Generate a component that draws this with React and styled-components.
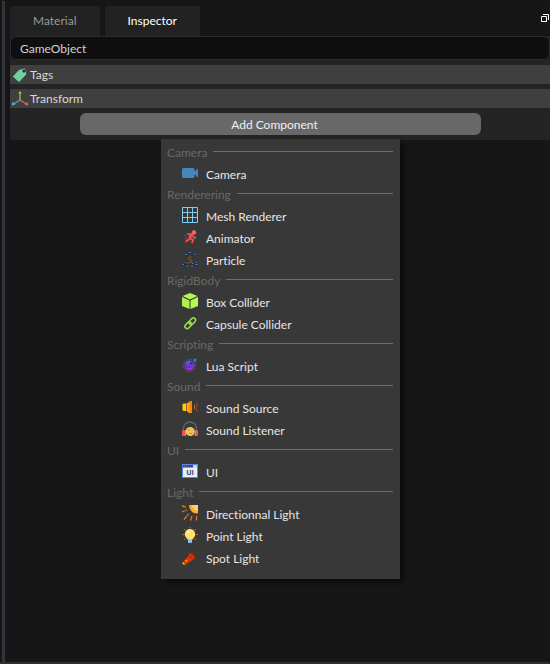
import React from "react";
import styled, { createGlobalStyle } from "styled-components";

const GlobalStyle = createGlobalStyle`
  *, *::before, *::after { box-sizing: border-box; }
  body { margin: 0; background: #161616; }
  body, button, input {
    font-family: Lato, "Open Sans", sans-serif;
    font-size: 12px;
    line-height: 16px;
    font-variant-ligatures: none;
  }
`;

const Dock = styled.main`
  display: flex;
  min-height: 100vh;
  padding: 1px 0 0 2px;
  background: #161616;
  border-bottom: 2px solid #2b2e32;
`;

const Splitter = styled.div`
  flex: none;
  width: 3px;
  background: #2f353a;
`;

const Content = styled.div`
  flex: 1;
  min-width: 0;
  padding: 5px 0 0 5px;
`;

const TabBar = styled.div`
  display: flex;
  align-items: flex-start;
  gap: 5px;
`;

const Tab = styled.button`
  height: 30px;
  padding: 0 23px;
  border: 0;
  border-radius: 2px 2px 0 0;
  background: #222222;
  color: ${(p) => (p["aria-selected"] ? "#ffffff" : "#989898")};
`;

const FloatButton = styled.button`
  display: flex;
  margin: 8px 1px 0 auto;
  padding: 0;
  border: 0;
  background: none;
`;

const Panel = styled.section`
  display: flex;
  flex-direction: column;
  gap: 5px;
  padding-bottom: 5px;
  background: #242424;
`;

const NameInput = styled.input`
  width: 100%;
  height: 24px;
  padding: 0 9px;
  border: 1px solid #2c2c2c;
  border-radius: 6px;
  background: #0f0f0f;
  color: #d2d2d2;
  outline: none;
`;

const Header = styled.button`
  display: flex;
  align-items: center;
  gap: 2px;
  height: 19px;
  padding: 0 2px;
  border: 0;
  background: #3f3f3f;
  color: #d8d8d8;
  text-align: left;
`;

const AddArea = styled.div`
  position: relative;
  margin: 0 69px 0 70px;
`;

const AddButton = styled.button`
  display: block;
  width: 100%;
  height: 22px;
  padding: 2px 12px 0 0;
  border: 0;
  border-radius: 6px;
  background: #686868;
  color: #f0f0f0;
`;

const Menu = styled.div`
  position: absolute;
  top: 100%;
  left: 0;
  right: 0;
  width: 239px;
  margin: 4px auto 0;
  padding: 5px 7px 9px 6px;
  background: #383838;
  box-shadow: 4px 4px 4px rgba(0, 0, 0, 0.45);
`;

const SectionTitle = styled.div`
  display: flex;
  gap: 6px;
  height: 20px;
  line-height: 18px;
  color: #686868;

  &::after {
    content: "";
    flex: 1;
    height: 1px;
    margin-top: 7px;
    background: #6e6e6e;
  }
`;

const Item = styled.button`
  display: flex;
  align-items: flex-start;
  gap: 8px;
  width: 100%;
  height: 22px;
  padding: 1px 0 0 15px;
  border: 0;
  background: none;
  color: #e6e6e6;
  text-align: left;
`;

const ItemLabel = styled.span`
  line-height: 20px;
`;

const Glyph = styled.svg`
  flex: none;
  display: block;
`;

const Icon = ({ children, size = 16 }) => (
  <Glyph width={size} height={size} viewBox={`0 0 ${size} ${size}`} aria-hidden="true">
    {children}
  </Glyph>
);

const TagIcon = () => (
  <Icon>
    <path d="M7 2.500 14 1l.5 6.500L7 15.500.5 9.500Z" fill="#72cf9f" stroke="#28332d" strokeWidth=".6" />
    <circle cx="12" cy="4" r="1.600" fill="#202824" />
    <path d="m12.500 3.500 3-3" stroke="#263a30" />
  </Icon>
);

const AxesIcon = () => (
  <Icon>
    <path d="M8 9V2" stroke="#8bc34a" strokeWidth="1.300" />
    <path d="m8 9-6.500 4" stroke="#5ba3c8" strokeWidth="1.300" />
    <path d="m8 9 6.500 4" stroke="#e8653a" strokeWidth="1.300" />
    <path d="M6.300 2.500h3.400L8 0Z" fill="#a4d844" />
    <path d="m0 14 1-2.500 1.700 2Z" fill="#64b5dc" stroke="#64b5dc" strokeWidth=".7" />
    <path d="m16 14-1-2.500-1.700 2Z" fill="#f36b40" stroke="#f36b40" strokeWidth=".7" />
  </Icon>
);

const CameraIcon = () => (
  <Icon>
    <rect y="3" width="12.500" height="10" rx="1.500" fill="#4387be" />
    <path d="M12 6h1.500L15 4h1v8h-1l-1.500-2H12Z" fill="#4387be" />
  </Icon>
);

const MeshIcon = () => (
  <Icon>
    <path d="M.5.5h15v15H.5ZM5.500 0v16M10.500 0v16M0 5.500h16M0 10.500h16" fill="none" stroke="#7fcdf5" />
  </Icon>
);

const AnimatorIcon = () => (
  <Icon>
    <circle cx="12" cy="3.500" r="2.200" fill="#ff6262" />
    <path d="M5 5h5l2 4 2-1" fill="none" stroke="#f25353" strokeWidth="1.600" strokeLinejoin="round" />
    <path d="m9.500 5-2 4" stroke="#f25353" strokeWidth="3" />
    <path d="m7.500 9 3.500 2-1 3M7.500 9.500 6 11.500H3.500" fill="none" stroke="#f25353" strokeWidth="1.800" strokeLinejoin="round" />
    <path d="M2 6.500h2.500M3 9h2.500M3 13.500h2" stroke="#993e3e" />
  </Icon>
);

const ParticleIcon = () => (
  <Icon>
    <g fill="#1b2c45">
      <circle cx="8" cy="2" r="1.200" />
      <circle cx="3.500" cy="4" r="1.200" />
      <circle cx="12.500" cy="4" r="1.200" />
      <circle cx="2" cy="13.500" r="1.500" />
      <circle cx="5.500" cy="14" r="1.500" />
      <circle cx="10" cy="14" r="1.500" />
      <circle cx="14" cy="13.500" r="1.500" />
    </g>
    <path d="M7 1.500h2M3 3.500h1.500M12 3.500h1.500M1.500 11.500h1M13.500 11.500h1M.5 13.500H2M4.500 12.500h1M4.500 15h2M9 15h2M10 12.500h1M13.500 13.500h2" stroke="#3a8af0" />
    <path d="M9.500 6H7v3h2.500v2.500H6.500" fill="none" stroke="#82541c" />
  </Icon>
);

const BoxIcon = () => (
  <Icon>
    <path d="M8 0 15.500 3 8 6.500.5 3Z" fill="#b4f652" />
    <path d="M0 4 7.500 7.500V16L0 13Z" fill="#aef04c" />
    <path d="M16 4 8.500 7.500V16L16 13Z" fill="#b4fa50" />
  </Icon>
);

const CapsuleIcon = () => (
  <Icon>
    <g fill="none" stroke="#9ddc4c" strokeWidth="1.500">
      <rect x="6.500" y="4" width="7.500" height="4.500" rx="2.250" transform="rotate(-45 10.250 6.250)" />
      <rect x="2.500" y="8" width="7.500" height="4.500" rx="2.250" transform="rotate(-45 6.250 10.250)" />
    </g>
  </Icon>
);

const LuaIcon = () => (
  <Icon>
    <defs>
      <linearGradient id="lua" x1="0" y1="0" x2="0" y2="1">
        <stop stopColor="#376be8" />
        <stop offset=".5" stopColor="#7a35dd" />
        <stop offset="1" stopColor="#b025e8" />
      </linearGradient>
    </defs>
    <circle cx="7.500" cy="8.500" r="6.300" fill="none" stroke="#777083" strokeDasharray="1 1.500" />
    <circle cx="7.500" cy="8.500" r="5" fill="url(#lua)" />
    <circle cx="9.500" cy="6.300" r="1.300" fill="#35305d" />
    <path d="M4.500 7.500v3H6M7.500 8.500v2h1M10 9.500v1" fill="none" stroke="#4b2690" strokeWidth=".7" />
    <circle cx="13" cy="3" r="1.600" fill="#3279f2" />
  </Icon>
);

const SpeakerIcon = () => (
  <Icon>
    <path d="M1.500 4.500H4v7.500H1.500L.5 11V5.500Z" fill="#ffd000" />
    <path d="M4.500 4.500 8 2.500v12L4.500 12Z" fill="#ffa50a" />
    <path d="M7.500 2H10v12H7.500Z" fill="#f58310" />
    <path d="M12.500 5.500v5" stroke="#bd6a1d" />
    <path d="M14.700 3.500v9" stroke="#864727" strokeWidth="1.200" />
  </Icon>
);

const HeadphonesIcon = () => (
  <Icon>
    <path d="M1.500 10V7.500a6.500 6.500 0 0 1 13 0V10" fill="none" stroke="#576773" strokeWidth="1.300" />
    <circle cx="8.200" cy="10.500" r="4.500" fill="#f2c94f" />
    <path d="M6 9.500 8 8.500M10 9.500l1-1M7 12q1.500 1 3.500 0" fill="none" stroke="#94702b" strokeWidth=".7" />
    <rect y="9" width="3.500" height="6" rx="1.300" fill="#f4525b" />
    <rect x="13" y="9" width="3" height="6" rx="1.300" fill="#f4525b" />
    <path d="M3.500 9v6M13 9v6" stroke="#f39aa0" strokeWidth=".8" />
  </Icon>
);

const WindowLabel = styled.text`
  font: 700 7px "Open Sans", sans-serif;
`;

const WindowIcon = () => (
  <Icon>
    <rect x=".5" y="1.500" width="15" height="13" fill="#e5efff" stroke="#4d8ce8" />
    <path d="M1 2h10v2.500H1Z" fill="#493e68" />
    <path d="M11 2h4v2.500h-4Z" fill="#bbd3ff" />
    <path d="M2 3h1M4 3h1M6 3h1" stroke="#b8667b" />
    <WindowLabel x="8" y="12" textAnchor="middle" fill="#394567">UI</WindowLabel>
  </Icon>
);

const SunIcon = () => (
  <Icon>
    <path d="M7 0h9v8.500Q8 9 7 0Z" fill="#ffa735" />
    <path d="M10 0h6v6q-5 0-6-6Z" fill="#ffd06b" />
    <path d="m0 1 4 1M0 7l5-2M2 14.500 6.500 9M8.500 15.500 10 11M14.500 11v4.500" stroke="#d9792b" strokeWidth="1.300" />
    <path d="m3 1.500 2 1M2 6l2-1M4 12l2-2" stroke="#674331" strokeWidth=".7" />
  </Icon>
);

const BulbIcon = () => (
  <Icon>
    <path d="M8 0v1.500M2 2l1.500 1.500M14 2l-1.500 1.500M0 7.500h2.500M13.500 7.500H16M2 13l1.500-1.500M14 13l-1.500-1.500" stroke="#967b2e" />
    <path d="M8 2a5.200 5.200 0 0 1 3.500 9L10 13H6l-1.500-2A5.200 5.200 0 0 1 8 2Z" fill="#ffe071" />
    <path d="M5.500 5.500q1-1.500 2.500-1.500" fill="none" stroke="#fff6c9" strokeWidth="1.500" />
    <rect x="6" y="12" width="4" height="4" rx="1" fill="#82c8ed" />
  </Icon>
);

const FlashlightIcon = () => (
  <Icon>
    <path d="m0 14 6-6.500L7 4.500 9.500 4 13 7.500l-.5 2.500-3 1.500L3 16Z" fill="#d63909" />
    <path d="m6.500 6 4.500 4.500M8.500 4.500l4 4" stroke="#842510" />
    <path d="m.5 13.500 2 2.500M3.500 11l1.500 1.500" stroke="#f5a900" strokeWidth="1.300" />
    <path d="m11.500 3.500.5-3M13 4.500l2-3.500M13.500 6l2.500-1" stroke="#6c292b" />
  </Icon>
);

const SECTIONS = [
  ["Camera", [["Camera", CameraIcon]]],
  ["Renderering", [["Mesh Renderer", MeshIcon], ["Animator", AnimatorIcon], ["Particle", ParticleIcon]]],
  ["RigidBody", [["Box Collider", BoxIcon], ["Capsule Collider", CapsuleIcon]]],
  ["Scripting", [["Lua Script", LuaIcon]]],
  ["Sound", [["Sound Source", SpeakerIcon], ["Sound Listener", HeadphonesIcon]]],
  ["UI", [["UI", WindowIcon]]],
  ["Light", [["Directionnal Light", SunIcon], ["Point Light", BulbIcon], ["Spot Light", FlashlightIcon]]],
];

export default function App() {
  return (
    <>
      <GlobalStyle />
      <Dock>
        <Splitter />
        <Content>
          <TabBar role="tablist">
            <Tab role="tab" aria-selected={false}>Material</Tab>
            <Tab role="tab" aria-selected={true}>Inspector</Tab>
            <FloatButton aria-label="Float panel">
              <Icon size={8}>
                <path d="M.5 2.500h5v5h-5Z" fill="none" stroke="#fff" />
                <path d="M2 .5h5.500V6" fill="none" stroke="#fff" />
              </Icon>
            </FloatButton>
          </TabBar>
          <Panel>
            <NameInput aria-label="Name" defaultValue="GameObject" />
            <Header><TagIcon />Tags</Header>
            <Header><AxesIcon />Transform</Header>
            <AddArea>
              <AddButton aria-haspopup="menu" aria-expanded={true}>Add Component</AddButton>
              <Menu role="menu">
                {SECTIONS.map(([title, items]) => (
                  <div key={title} role="group" aria-label={title}>
                    <SectionTitle>{title}</SectionTitle>
                    {items.map(([label, Pic]) => (
                      <Item key={label} role="menuitem">
                        <Pic />
                        <ItemLabel>{label}</ItemLabel>
                      </Item>
                    ))}
                  </div>
                ))}
              </Menu>
            </AddArea>
          </Panel>
        </Content>
      </Dock>
    </>
  );
}
